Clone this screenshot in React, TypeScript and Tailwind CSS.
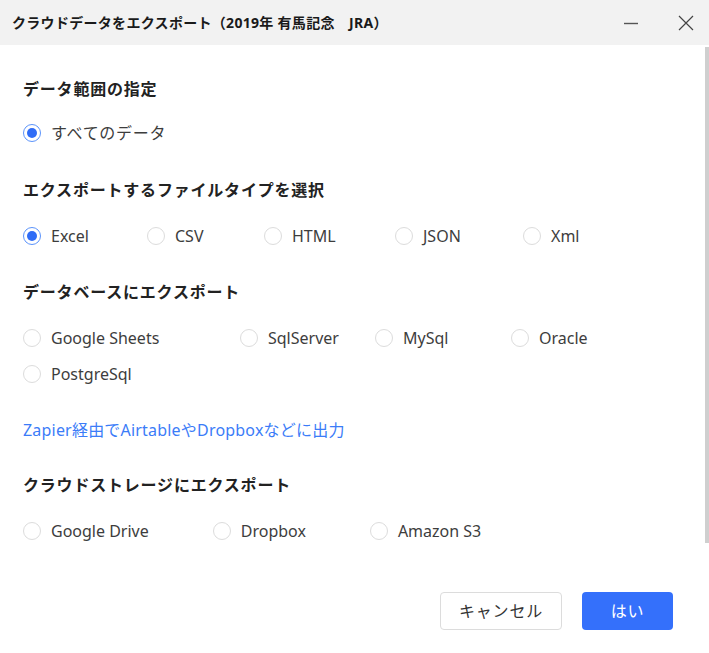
import { FunctionComponent } from "react";

const font = { fontFamily: '"Noto Sans", "Noto Sans CJK JP", sans-serif' };

type RadioProps = { label: string; checked?: boolean; className?: string; jp?: boolean };

const Radio: FunctionComponent<RadioProps> = ({ label, checked, className, jp }) => (
  <label className={`flex items-center h-6 ${className ?? ""}`}>
    {checked ? (
      <span className="w-[18px] h-[18px] rounded-full border border-[#5b93fb] flex items-center justify-center shrink-0">
        <span className="w-[10px] h-[10px] rounded-full bg-[#2f6cf6]" />
      </span>
    ) : (
      <span className="w-[18px] h-[18px] rounded-full border border-[#dcdcdc] bg-white shrink-0" />
    )}
    <span
      className={`ml-[10px] text-[16px] text-[#3d3d3d] whitespace-nowrap ${jp ? "tracking-[0.7px]" : ""}`}
    >
      {label}
    </span>
  </label>
);

const Heading: FunctionComponent<{ text: string; className?: string }> = ({ text, className }) => (
  <h2
    className={`h-6 leading-6 text-[16px] font-bold text-[#222] tracking-[0.8px] ${className ?? ""}`}
  >
    {text}
  </h2>
);

const App: FunctionComponent = () => {
  return (
    <div className="relative w-[709px] h-[653px] bg-white overflow-hidden" style={font}>
      {/* title bar */}
      <div className="h-[45px] bg-[#f2f2f2] flex items-center pl-3 pr-[15px]">
        <span className="text-[14px] font-bold text-[#1a1a1a] tracking-[0.3px] whitespace-nowrap">
          クラウドデータをエクスポート（2019年 有馬記念　JRA）
        </span>
        <div className="ml-auto flex items-center gap-[39px]">
          <svg width="16" height="16" viewBox="0 0 16 16">
            <path d="M1 8.5h14" stroke="#555" strokeWidth="1.4" />
          </svg>
          <svg width="16" height="16" viewBox="0 0 16 16">
            <path d="M1 1l14 14M15 1L1 15" stroke="#444" strokeWidth="1.2" />
          </svg>
        </div>
      </div>

      {/* scrollbar */}
      <div className="absolute right-0 top-[47px] w-[4px] h-[496px] bg-[#cfcfcf]" />

      <div className="px-[23px] pt-[32px] flex flex-col">
        <Heading text="データ範囲の指定" />
        <Radio label="すべてのデータ" checked jp className="mt-5" />

        <Heading text="エクスポートするファイルタイプを選択" className="mt-[33px]" />
        <div className="flex mt-[22px]">
          <Radio label="Excel" checked className="w-[124px]" />
          <Radio label="CSV" className="w-[117px]" />
          <Radio label="HTML" className="w-[131px]" />
          <Radio label="JSON" className="w-[128px]" />
          <Radio label="Xml" />
        </div>

        <Heading text="データベースにエクスポート" className="mt-8" />
        <div className="flex mt-[22px]">
          <Radio label="Google Sheets" className="w-[217px]" />
          <Radio label="SqlServer" className="w-[135px]" />
          <Radio label="MySql" className="w-[136px]" />
          <Radio label="Oracle" />
        </div>
        <Radio label="PostgreSql" className="mt-3" />

        <a className="mt-8 h-6 leading-6 text-[16px] text-[#3b7cf8] tracking-[0.2px] whitespace-nowrap cursor-pointer">
          Zapier経由でAirtableやDropboxなどに出力
        </a>

        <Heading text="クラウドストレージにエクスポート" className="mt-[31px]" />
        <div className="flex mt-[22px] gap-[64px]">
          <Radio label="Google Drive" />
          <Radio label="Dropbox" />
          <Radio label="Amazon S3" />
        </div>
      </div>

      <div className="absolute right-[36px] top-[592px] flex gap-5">
        <button className="w-[122px] h-[38px] rounded border border-[#dcdcdc] bg-white text-[16px] text-[#333] tracking-[0.8px]">
          キャンセル
        </button>
        <button className="w-[91px] h-[38px] rounded bg-[#3470fb] text-[16px] text-white tracking-[0.8px]">
          はい
        </button>
      </div>
    </div>
  );
};

export default App;
